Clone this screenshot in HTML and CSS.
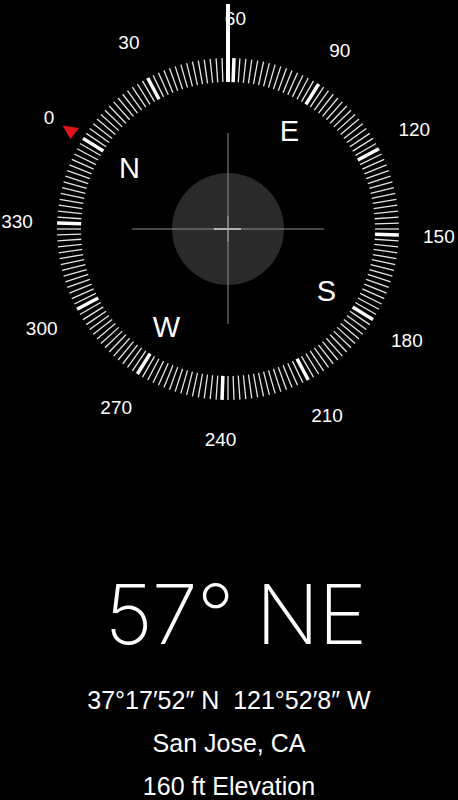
FILE: index.html
```html
<!DOCTYPE html>
<html lang="en">
<head>
    <meta charset="UTF-8">
    <meta name="viewport" content="width=device-width, initial-scale=1.0">
    <title>Compass</title>
    <link rel="stylesheet" href="styles.css">
</head>
<body>
    <div class="compass">
        <svg id="dial" width="458" height="458" viewBox="0 0 458 458">
            <g id="ticks"></g>
            <g id="labels"></g>
            <circle class="bubble" cx="228" cy="229" r="56"></circle>
            <line class="cross" x1="132" y1="229" x2="324" y2="229"></line>
            <line class="cross" x1="228" y1="133" x2="228" y2="324"></line>
            <line class="cross-mid" x1="214" y1="229" x2="241" y2="229"></line>
            <line class="cross-mid faint" x1="228" y1="216" x2="228" y2="242"></line>
            <line class="needle" x1="228" y1="4" x2="228" y2="82"></line>
            <polygon class="marker" points="62.5,125.5 79,128 70.5,139"></polygon>
        </svg>
    </div>

    <div class="reading">
        <div class="heading">57° NE</div>
        <div class="line coords">37°17′52″ N&nbsp; 121°52′8″ W</div>
        <div class="line">San Jose, CA</div>
        <div class="line">160 ft Elevation</div>
    </div>

    <script>
        const ns = 'http://www.w3.org/2000/svg'
        const cx = 228
        const cy = 229
        const rot = -58

        const ticks = document.getElementById('ticks')
        const labels = document.getElementById('labels')

        for (let d = 0; d < 360; d += 2) {
            let t = document.createElementNS(ns, 'line')
            t.setAttribute('x1', cx)
            t.setAttribute('y1', cy - 171)
            t.setAttribute('x2', cx)
            t.setAttribute('y2', cy - 147)
            t.setAttribute('transform', `rotate(${d + rot} ${cx} ${cy})`)
            t.setAttribute('class', d % 30 === 0 ? 'tick major' : 'tick')
            ticks.appendChild(t)
        }

        const addText = (txt, deg, r, cls) => {
            let a = (deg + rot) * Math.PI / 180
            let el = document.createElementNS(ns, 'text')
            el.setAttribute('x', (cx + r * Math.sin(a)).toFixed(1))
            el.setAttribute('y', (cy - r * Math.cos(a)).toFixed(1))
            el.setAttribute('class', cls)
            el.textContent = txt
            labels.appendChild(el)
        }

        for (let d = 0; d < 360; d += 30) {
            addText(String(d), d, 211, 'deg')
        }

        const points = [['N', 0], ['E', 90], ['S', 180], ['W', 270]]
        points.forEach(p => addText(p[0], p[1], 116, 'cardinal'))
    </script>
</body>
</html>
```

FILE: styles.css
```css
body{
    margin: 0;
    background-color: #000;
    color: #fff;
    font-family: "Liberation Sans", Arial, sans-serif;
}
div.compass{
    height: 458px;
}
svg{
    display: block;
}
.tick{
    stroke: #e6e6e6;
    stroke-width: 1.3;
}
.tick.major{
    stroke: #fff;
    stroke-width: 3.5;
}
text{
    fill: #fff;
    text-anchor: middle;
    dominant-baseline: central;
    font-family: "Liberation Sans", Arial, sans-serif;
}
text.deg{
    font-size: 19px;
}
text.cardinal{
    font-size: 29px;
}
.bubble{
    fill: #2a2a2a;
}
.cross{
    stroke: #8c8c8c;
    stroke-width: 1;
}
.cross-mid{
    stroke: #d0d0d0;
    stroke-width: 1.5;
}
.cross-mid.faint{
    stroke: #a0a0a0;
    stroke-width: 1;
}
.needle{
    stroke: #fff;
    stroke-width: 4;
}
.marker{
    fill: #e3141c;
}
div.reading{
    margin-top: 106px;
    text-align: center;
}
div.heading{
    font-family: Inter, Roboto, sans-serif;
    font-weight: 200;
    font-size: 83px;
    line-height: 100px;
    letter-spacing: -1px;
    padding-left: 13px;
    margin-bottom: 15px;
}
div.line{
    font-size: 25px;
    line-height: 43px;
}
```
